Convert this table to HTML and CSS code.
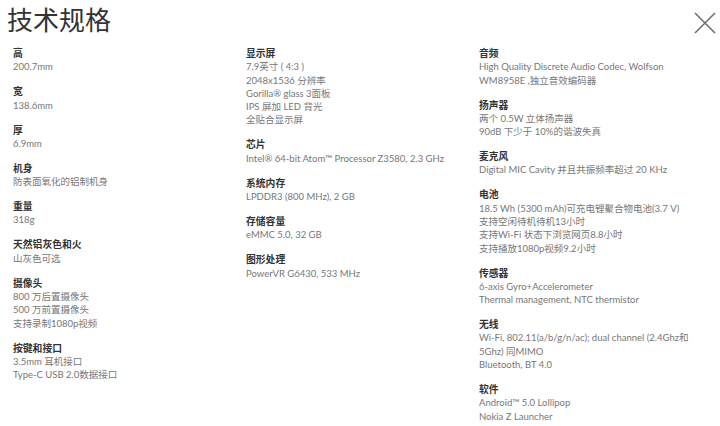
FILE: index.html
```html
<!DOCTYPE html>
<html lang="zh-CN">
<head>
<meta charset="utf-8">
<title>技术规格</title>
<link rel="stylesheet" href="styles.css">
</head>
<body>
<header class="head">
  <h1 class="title">技术规格</h1>
  <button class="close" aria-label="关闭">
    <svg width="22" height="22" viewBox="0 0 22 22"><path d="M1 1 L21 21 M21 1 L1 21" stroke="#6f6f6f" stroke-width="1.6" fill="none"/></svg>
  </button>
</header>
<main class="grid">
  <div class="col">
    <section class="spec"><div class="label">高</div><div class="val">200.7mm</div></section>
    <section class="spec"><div class="label">宽</div><div class="val">138.6mm</div></section>
    <section class="spec"><div class="label">厚</div><div class="val">6.9mm</div></section>
    <section class="spec"><div class="label">机身</div><div class="val">防表面氧化的铝制机身</div></section>
    <section class="spec"><div class="label">重量</div><div class="val">318g</div></section>
    <section class="spec"><div class="label">天然铝灰色和火</div><div class="val">山灰色可选</div></section>
    <section class="spec"><div class="label">摄像头</div><div class="val">800 万后置摄像头</div><div class="val">500 万前置摄像头</div><div class="val">支持录制1080p视频</div></section>
    <section class="spec"><div class="label">按键和接口</div><div class="val">3.5mm 耳机接口</div><div class="val">Type-C USB 2.0数据接口</div></section>
  </div>
  <div class="col">
    <section class="spec"><div class="label">显示屏</div><div class="val">7.9英寸 ( 4:3 )</div><div class="val">2048x1536 分辨率</div><div class="val">Gorilla® glass 3面板</div><div class="val">IPS 屏加 LED 背光</div><div class="val">全贴合显示屏</div></section>
    <section class="spec"><div class="label">芯片</div><div class="val">Intel® 64-bit Atom™ Processor Z3580, 2.3 GHz</div></section>
    <section class="spec"><div class="label">系统内存</div><div class="val">LPDDR3 (800 MHz), 2 GB</div></section>
    <section class="spec"><div class="label">存储容量</div><div class="val">eMMC 5.0, 32 GB</div></section>
    <section class="spec"><div class="label">图形处理</div><div class="val">PowerVR G6430, 533 MHz</div></section>
  </div>
  <div class="col">
    <section class="spec"><div class="label">音频</div><div class="val">High Quality Discrete Audio Codec, Wolfson</div><div class="val">WM8958E ,独立音效编码器</div></section>
    <section class="spec"><div class="label">扬声器</div><div class="val">两个 0.5W 立体扬声器</div><div class="val">90dB 下少于 10%的谐波失真</div></section>
    <section class="spec"><div class="label">麦克风</div><div class="val">Digital MIC Cavity 并且共振频率超过 20 KHz</div></section>
    <section class="spec"><div class="label">电池</div><div class="val">18.5 Wh (5300 mAh)可充电锂聚合物电池(3.7 V)</div><div class="val">支持空闲待机待机13小时</div><div class="val">支持Wi-Fi 状态下浏览网页8.8小时</div><div class="val">支持播放1080p视频9.2小时</div></section>
    <section class="spec"><div class="label">传感器</div><div class="val">6-axis Gyro+Accelerometer</div><div class="val">Thermal management, NTC thermistor</div></section>
    <section class="spec"><div class="label">无线</div><div class="val">Wi-Fi, 802.11(a/b/g/n/ac); dual channel (2.4Ghz和</div><div class="val">5Ghz) 同MIMO</div><div class="val">Bluetooth, BT 4.0</div></section>
    <section class="spec"><div class="label">软件</div><div class="val">Android™ 5.0 Lollipop</div><div class="val">Nokia Z Launcher</div></section>
  </div>
</main>
</body>
</html>
```
FILE: styles.css
```css
html, body {
  margin: 0;
  padding: 0;
  background: #ffffff;
}
body {
  font-family: Lato, "Noto Sans CJK SC", sans-serif;
  color: #333333;
  width: 720px;
  height: 426px;
  overflow: hidden;
}
.head {
  display: flex;
  justify-content: space-between;
  align-items: flex-start;
  height: 46px;
}
.title {
  margin: 0;
  padding: 1px 0 0 7px;
  font-size: 26px;
  line-height: 36px;
  font-weight: 400;
  color: #333333;
  font-family: "Noto Sans CJK SC", sans-serif;
}
.close {
  margin: 12px 4px 0 0;
  padding: 0;
  border: 0;
  background: none;
  width: 22px;
  height: 22px;
  display: block;
}
.close svg { display: block; }
.grid {
  display: grid;
  grid-template-columns: 233px 233px 241px;
  padding-left: 13px;
  padding-top: 1px;
}
.col {
  display: flex;
  flex-direction: column;
  gap: 11.7px;
}
.label {
  font-size: 9.8px;
  line-height: 13.3px;
  font-weight: 700;
  color: #333333;
  white-space: nowrap;
}
.val {
  font-size: 9.5px;
  line-height: 13.3px;
  color: #777777;
  white-space: nowrap;
}
```
